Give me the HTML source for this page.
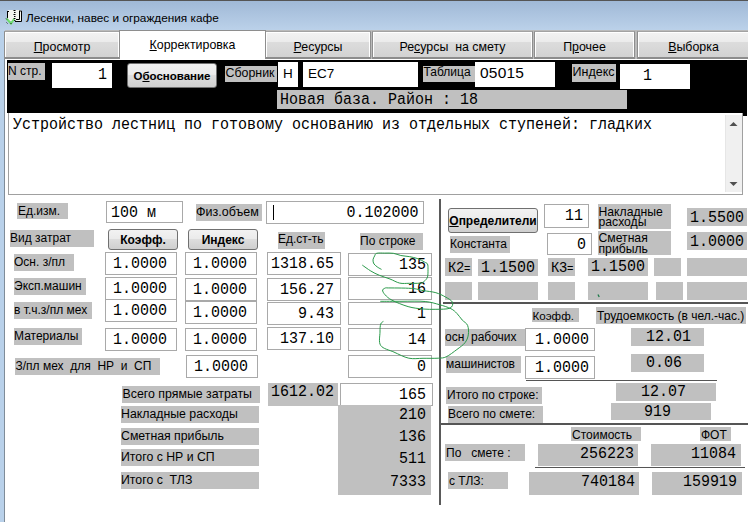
<!DOCTYPE html><html><head><meta charset="utf-8"><style>
*{margin:0;padding:0;box-sizing:border-box}
html,body{width:748px;height:522px;overflow:hidden;background:#fff;position:relative;font-family:"Liberation Sans",sans-serif;color:#000}
div{position:absolute}
span{position:absolute;white-space:pre;line-height:0}
.m{font-family:"Liberation Mono",monospace;transform:scaleY(1.1);transform-origin:0 0.2665em}
.g{background:#c0c0c0}
.g span{font-size:12px}
.bx{background:#fff;border:1px solid #a9a9a9}
.wb{background:#fff}
.gb{background:#c0c0c0}
.btn{border:1px solid #707070;border-radius:3px;background:linear-gradient(#f2f2f2 0%,#ebebeb 45%,#dddddd 50%,#cfcfcf 100%);font-weight:bold}
.btn span{left:0;right:0;text-align:center}
.tab{background:linear-gradient(#f2f2f2 0%,#ebebeb 40%,#dcdcdc 42%,#d2d2d2 100%);border:1px solid #8e8e8e;border-top-color:#a2a2a2;border-bottom:2px solid #8c8c8c;box-shadow:inset 1px 1px 0 #fff,inset -1px 0 0 #fff}
.tab span{left:0;right:0;text-align:center;font-size:12.4px}
small{font-size:11px}
u{text-decoration:underline;text-underline-offset:1px}
</style></head><body>
<div style="left:0;top:0;width:748px;height:31px;background:linear-gradient(#9fb8d6,#bcd2ea)"></div>
<div style="left:0;top:0;width:748px;height:1px;background:#555"></div>
<div style="left:0;top:31px;width:4px;height:491px;background:#b9d1ea"></div>
<div style="left:4px;top:31px;width:1px;height:491px;background:#7f8c99"></div>
<svg style="position:absolute;left:0;top:0" width="30" height="30"><rect x="8" y="10" width="13" height="11" fill="#f4f4f0"/><path d="M7.5 11v7M7.5 11.5h1.5" stroke="#000" stroke-width="1" fill="none"/><path d="M13.5 10.5h2M14 12.5h1.5M13.5 14.5h2M14 16.5h1.5M13.5 18.5h2M14 20.5h1.5" stroke="#000" stroke-width="1"/><path d="M15 21.5h6.5v-10.5h-1.5" stroke="#000" stroke-width="1" fill="none"/><path d="M16 19.5h3.5v-9" stroke="#000" stroke-width="1" fill="none"/><path d="M6.5 18.5l4.5 5l3-4.5" stroke="#6fdc6f" stroke-width="2" fill="none"/><path d="M6 18.5l1 1M6.5 22.5l1 1M10.5 23.5l1 0" stroke="#222" stroke-width="1"/></svg>
<div style="left:26px;top:0;height:31px;width:400px"><span style="left:0;top:17.9px;font-size:11.8px;color:#000">Лесенки, навес и ограждения кафе</span></div>
<div style="left:5px;top:30px;width:743px;height:29px;background:#bababa"></div>
<div class="tab" style="left:4px;top:31px;width:116px;height:28px"><span style="top:15.20px"><u>П</u>росмотр</span></div>
<div class="tab" style="left:265px;top:31px;width:106px;height:28px"><span style="top:15.20px"><u>Р</u>есурсы</span></div>
<div class="tab" style="left:372px;top:31px;width:161px;height:28px"><span style="top:15.20px">Ре<u>с</u>урсы  на смету</span></div>
<div class="tab" style="left:534px;top:31px;width:101px;height:28px"><span style="top:15.20px">П<u>р</u>очее</span></div>
<div class="tab" style="left:637px;top:31px;width:113px;height:28px"><span style="top:15.20px"><u>В</u>ыборка</span></div>
<div style="left:119px;top:30px;width:147px;height:30px;background:#fff;border:1px solid #8e8e8e;border-bottom:0"><span style="left:0;right:0;text-align:center;top:13.70px;font-size:12.4px"><u>К</u>орректировка</span></div>
<div style="left:5px;top:59px;width:743px;height:1px;background:#fff"></div>
<div style="left:7px;top:60px;width:740px;height:53px;background:#000"></div>
<div style="left:742px;top:112px;width:5px;height:3.5px;background:#000"></div>
<div class="g" style="left:8px;top:63px;width:37px;height:17px;"><span style="left:0px;top:7.54px;font-size:12px">N стр.</span></div>
<div class="wb" style="left:52px;top:63px;width:60px;height:25px;"><span class="m" style="right:5px;top:13.00px;font-size:15px">1</span></div>
<div class="btn" style="left:127px;top:63px;width:90px;height:25px"><span style="top:12.02px;font-size:11.5px">О<u>б</u>основание</span></div>
<div class="g" style="left:225px;top:66px;width:52px;height:16px;"><span style="left:0.5px;top:7.40px;font-size:12.4px">Сборник</span></div>
<div class="wb" style="left:278px;top:62px;width:20px;height:25px;"><span style="left:5px;top:11.82px;font-size:13.5px">Н</span></div>
<div class="wb" style="left:303px;top:62px;width:115px;height:25px;"><span style="left:5px;top:12.32px;font-size:13.5px">ЕС7</span></div>
<div class="g" style="left:423px;top:65.5px;width:52px;height:16px;"><span style="left:0.5px;top:6.84px;font-size:12px">Таблица</span></div>
<div class="wb" style="left:475px;top:62px;width:80px;height:25px;letter-spacing:0.2px"><span style="left:5px;top:11.13px;font-size:15.5px">05015</span></div>
<div class="g" style="left:572px;top:64px;width:44px;height:18px;"><span style="left:0.5px;top:8.37px;font-size:12.5px">Индекс</span></div>
<div class="wb" style="left:620px;top:64px;width:70px;height:25px;"><span class="m" style="left:23px;top:13.00px;font-size:15px">1</span></div>
<div class="gb" style="left:277px;top:90px;width:350px;height:19px;"><span class="m" style="left:3px;top:11.00px;font-size:15px">Новая база. Район : 18</span></div>
<div style="left:277px;top:90px;width:350px;height:19px"></div>
<div style="left:8px;top:113px;width:735px;height:82px;border:1px solid #a0a0a0;border-top:0;background:#fff"><span class="m" style="left:4px;top:13.00px;font-size:15px">Устройство лестниц по готовому основанию из отдельных ступеней: гладких</span></div>
<div style="left:725px;top:115px;width:17px;height:77px;background:#f0f0f0;border-left:1px solid #e6e6e6"></div>
<svg style="position:absolute;left:729px;top:121px" width="9" height="6"><path d="M0.5 5L4.5 1L8.5 5z" fill="#505050"/></svg>
<svg style="position:absolute;left:729px;top:181px" width="9" height="6"><path d="M0.5 1L4.5 5L8.5 1z" fill="#505050"/></svg>
<div class="g" style="left:17px;top:203px;width:51px;height:16px;"><span style="left:1px;top:7.84px;font-size:12px">Ед.изм.</span></div>
<div class="bx" style="left:106px;top:201px;width:77px;height:22px;"><span class="m" style="left:4px;top:12.00px;font-size:15px">100 м</span></div>
<div class="g" style="left:196px;top:204px;width:66px;height:17px;"><span style="left:0px;top:7.97px;font-size:12.5px">Физ.объем</span></div>
<div class="bx" style="left:266px;top:201px;width:158px;height:23px;"><span class="m" style="right:4.5px;top:12.00px;font-size:15px">0.102000</span></div>
<div style="left:272.5px;top:205px;width:1.5px;height:15px;background:#000"></div>
<div class="g" style="left:10px;top:230px;width:84px;height:17px;"><span style="left:0px;top:7.84px;font-size:12px">Вид затрат</span></div>
<div class="btn" style="left:108px;top:229px;width:70px;height:21px"><span style="top:10.34px;font-size:12px">Коэфф.</span></div>
<div class="btn" style="left:188px;top:229px;width:70px;height:21px"><span style="top:10.34px;font-size:12px">Индекс</span></div>
<div class="g" style="left:278px;top:232px;width:47px;height:17px;"><span style="left:0px;top:7.34px;font-size:12px">Ед.ст-ть</span></div>
<div class="g" style="left:360px;top:233px;width:63px;height:17px;"><span style="left:0px;top:7.84px;font-size:12px">По строке</span></div>
<div class="g" style="left:14px;top:254px;width:60px;height:17px;"><span style="left:0px;top:7.84px;font-size:12px">Осн. з/пл</span></div>
<div class="g" style="left:14px;top:278px;width:72px;height:17px;"><span style="left:0px;top:7.84px;font-size:12px">Эксп.машин</span></div>
<div class="g" style="left:14px;top:302px;width:78px;height:17px;"><span style="left:0px;top:7.84px;font-size:12px">в т.ч.з/пл мех</span></div>
<div class="g" style="left:14px;top:328px;width:68px;height:17px;"><span style="left:0px;top:7.84px;font-size:12px">Материалы</span></div>
<div class="g" style="left:15px;top:358px;width:145px;height:17px;"><span style="left:0.5px;top:8.34px;font-size:12px">З/пл мех  для  НР  и  СП</span></div>
<div class="bx" style="left:105px;top:252px;width:72px;height:23px;"><span class="m" style="left:7px;top:12.00px;font-size:15px">1.0000</span></div>
<div class="bx" style="left:105px;top:277px;width:72px;height:23px;"><span class="m" style="left:7px;top:12.00px;font-size:15px">1.0000</span></div>
<div class="bx" style="left:105px;top:299px;width:72px;height:23px;"><span class="m" style="left:7px;top:12.00px;font-size:15px">1.0000</span></div>
<div class="bx" style="left:105px;top:328px;width:72px;height:23px;"><span class="m" style="left:7px;top:12.00px;font-size:15px">1.0000</span></div>
<div class="bx" style="left:185px;top:252px;width:72px;height:23px;"><span class="m" style="left:7px;top:12.00px;font-size:15px">1.0000</span></div>
<div class="bx" style="left:185px;top:278px;width:72px;height:23px;"><span class="m" style="left:7px;top:12.00px;font-size:15px">1.0000</span></div>
<div class="bx" style="left:185px;top:301px;width:72px;height:23px;"><span class="m" style="left:7px;top:12.00px;font-size:15px">1.0000</span></div>
<div class="bx" style="left:185px;top:328px;width:72px;height:23px;"><span class="m" style="left:7px;top:12.00px;font-size:15px">1.0000</span></div>
<div class="bx" style="left:186px;top:355px;width:72px;height:23px;"><span class="m" style="left:7px;top:12.00px;font-size:15px">1.0000</span></div>
<div class="bx" style="left:267px;top:252px;width:74px;height:23px;"><span class="m" style="right:6px;top:12.00px;font-size:15px">1318.65</span></div>
<div class="bx" style="left:267px;top:278px;width:74px;height:23px;"><span class="m" style="right:6px;top:12.00px;font-size:15px">156.27</span></div>
<div class="bx" style="left:267px;top:302px;width:74px;height:23px;"><span class="m" style="right:6px;top:12.00px;font-size:15px">9.43</span></div>
<div class="bx" style="left:267px;top:327px;width:74px;height:23px;"><span class="m" style="right:6px;top:12.00px;font-size:15px">137.10</span></div>
<div class="bx" style="left:348px;top:253px;width:84px;height:23px;"><span class="m" style="right:5px;top:12.00px;font-size:15px">135</span></div>
<div class="bx" style="left:348px;top:277px;width:84px;height:23px;"><span class="m" style="right:5px;top:12.00px;font-size:15px">16</span></div>
<div class="bx" style="left:348px;top:302px;width:84px;height:23px;"><span class="m" style="right:5px;top:12.00px;font-size:15px">1</span></div>
<div class="bx" style="left:348px;top:328px;width:84px;height:23px;"><span class="m" style="right:5px;top:12.00px;font-size:15px">14</span></div>
<div class="bx" style="left:348px;top:355px;width:84px;height:23px;"><span class="m" style="right:5px;top:12.00px;font-size:15px">0</span></div>
<div class="g" style="left:122px;top:386px;width:138px;height:17px;"><span style="left:0.5px;top:7.72px;font-size:12.35px">Всего прямые затраты</span></div>
<div class="g" style="left:121px;top:406px;width:138px;height:17px;"><span style="left:0px;top:7.74px;font-size:12.3px">Накладные расходы</span></div>
<div class="g" style="left:121px;top:428px;width:138px;height:17px;"><span style="left:0px;top:7.74px;font-size:12.3px">Сметная прибыль</span></div>
<div class="g" style="left:121px;top:449px;width:138px;height:17px;"><span style="left:0px;top:7.74px;font-size:12.3px">Итого с НР и СП</span></div>
<div class="g" style="left:121px;top:472px;width:138px;height:17px;"><span style="left:0px;top:7.74px;font-size:12.3px">Итого с  ТЛЗ</span></div>
<div class="gb" style="left:268px;top:383px;width:70px;height:23px;"><span class="m" style="left:3px;top:10.00px;font-size:15px">1612.02</span></div>
<div class="gb" style="left:338px;top:405px;width:93px;height:90px"></div>
<div class="bx" style="left:340px;top:383px;width:93px;height:23px;"><span class="m" style="right:6px;top:12.00px;font-size:15px">165</span></div>
<div class="gb" style="left:338px;top:405px;width:93px;height:22px;"><span class="m" style="right:5px;top:11.00px;font-size:15px">210</span></div>
<div class="gb" style="left:338px;top:427px;width:93px;height:22px;"><span class="m" style="right:5px;top:11.00px;font-size:15px">136</span></div>
<div class="gb" style="left:338px;top:449px;width:93px;height:22px;"><span class="m" style="right:5px;top:11.00px;font-size:15px">511</span></div>
<div class="gb" style="left:338px;top:472px;width:93px;height:22px;"><span class="m" style="right:5px;top:11.00px;font-size:15px">7333</span></div>
<div style="left:439px;top:199px;width:2px;height:306px;background:#5a5a5a"></div>
<div style="left:443px;top:302px;width:305px;height:2px;background:#555"></div>
<div style="left:441px;top:423px;width:307px;height:2px;background:#555"></div>
<div class="btn" style="left:448px;top:208px;width:90px;height:25px"><span style="top:11.84px;font-size:12px"><u>О</u>пределители</span></div>
<div class="bx" style="left:544px;top:204px;width:45px;height:24px;"><span class="m" style="right:5px;top:11.50px;font-size:15px">11</span></div>
<div class="g" style="left:450px;top:236px;width:60px;height:17px;"><span style="left:0px;top:7.84px;font-size:12px">Константа</span></div>
<div class="bx" style="left:547px;top:233px;width:45px;height:22px;"><span class="m" style="right:5px;top:11.50px;font-size:15px">0</span></div>
<div class="g" style="left:598px;top:204px;width:73px;height:25px"><span style="left:0.5px;top:7.80px;font-size:12.2px">Накладные</span><span style="left:0.5px;top:18.30px;font-size:12.2px">расходы</span></div>
<div class="g" style="left:598px;top:231px;width:73px;height:24px"><span style="left:0.5px;top:7.30px;font-size:12.2px">Сметная</span><span style="left:0.5px;top:17.80px;font-size:12.2px">прибыль</span></div>
<div class="gb" style="left:687px;top:208px;width:60px;height:18px;"><span class="m" style="left:3px;top:10.50px;font-size:15px">1.5500</span></div>
<div class="gb" style="left:687px;top:232px;width:60px;height:18px;"><span class="m" style="left:3px;top:10.50px;font-size:15px">1.0000</span></div>
<div class="g" style="left:445px;top:258px;width:27px;height:18px;"><span style="left:3px;top:9.15px;font-size:14px">К2<small>=</small></span></div>
<div class="gb" style="left:478px;top:259px;width:60px;height:17px;"><span class="m" style="left:3px;top:10.00px;font-size:15px">1.1500</span></div>
<div class="g" style="left:548px;top:258px;width:27px;height:18px;"><span style="left:3px;top:9.15px;font-size:14px">К3<small>=</small></span></div>
<div class="gb" style="left:588px;top:258px;width:60px;height:18px;"><span class="m" style="left:3px;top:10.00px;font-size:15px">1.1500</span></div>
<div class="gb" style="left:654px;top:258px;width:27px;height:18px"></div>
<div class="gb" style="left:687px;top:258px;width:60px;height:18px"></div>
<div class="gb" style="left:445px;top:282px;width:27px;height:17.5px"></div>
<div class="gb" style="left:478px;top:282px;width:60px;height:17.5px"></div>
<div class="gb" style="left:548px;top:282px;width:27px;height:17.5px"></div>
<div class="gb" style="left:588px;top:282px;width:60px;height:17.5px"></div>
<div class="gb" style="left:656px;top:282px;width:27px;height:17.5px"></div>
<div class="gb" style="left:687px;top:282px;width:60px;height:17.5px"></div>
<div class="g" style="left:532px;top:308px;width:47px;height:14px;"><span style="left:0.5px;top:8.48px;font-size:11.6px">Коэфф.</span></div>
<div class="g" style="left:596px;top:307px;width:150px;height:17px;"><span style="left:1px;top:8.84px;font-size:12px">Трудоемкость (в чел.-час.)</span></div>
<div class="g" style="left:445px;top:329px;width:80px;height:17px;"><span style="left:0px;top:7.84px;font-size:12px">осн  рабочих</span></div>
<div class="bx" style="left:525px;top:328px;width:70px;height:23px;"><span class="m" style="left:9px;top:12.00px;font-size:15px">1.0000</span></div>
<div class="g" style="left:446px;top:356px;width:75px;height:17px;"><span style="left:0px;top:7.84px;font-size:12px">машинистов</span></div>
<div class="bx" style="left:525px;top:356px;width:70px;height:23px;"><span class="m" style="left:9px;top:12.00px;font-size:15px">1.0000</span></div>
<div class="gb" style="left:631px;top:328px;width:73px;height:18px;"><span class="m" style="left:15px;top:10.00px;font-size:15px">12.01</span></div>
<div class="gb" style="left:631px;top:354px;width:73px;height:18px;"><span class="m" style="left:15px;top:10.00px;font-size:15px">0.06</span></div>
<div style="left:526px;top:380px;width:191px;height:1px;background:#555"></div>
<div class="g" style="left:446px;top:387px;width:96px;height:17px;"><span style="left:1px;top:8.34px;font-size:12px">Итого по строке:</span></div>
<div class="gb" style="left:616px;top:383px;width:100px;height:18px;"><span class="m" style="left:25px;top:10.00px;font-size:15px">12.07</span></div>
<div class="g" style="left:448px;top:406px;width:95px;height:17px;"><span style="left:0px;top:8.34px;font-size:12px">Всего по смете:</span></div>
<div class="gb" style="left:611px;top:403px;width:100px;height:17px;"><span class="m" style="left:33px;top:10.00px;font-size:15px">919</span></div>
<div class="g" style="left:571px;top:427px;width:70px;height:14px;"><span style="left:1px;top:7.84px;font-size:12px">Стоимость</span></div>
<div class="g" style="left:700px;top:427px;width:31px;height:14px;"><span style="left:1px;top:7.84px;font-size:12px">ФОТ</span></div>
<div class="g" style="left:445px;top:444px;width:80px;height:17px;"><span style="left:1px;top:8.84px;font-size:12px">По   смете :</span></div>
<div class="gb" style="left:538px;top:444px;width:100px;height:22px;"><span class="m" style="right:4px;top:11.00px;font-size:15px">256223</span></div>
<div class="gb" style="left:651px;top:444px;width:90px;height:22px;"><span class="m" style="right:5px;top:11.00px;font-size:15px">11084</span></div>
<div style="left:535px;top:467px;width:210px;height:1px;background:#555"></div>
<div class="g" style="left:448px;top:472px;width:60px;height:17px;"><span style="left:1px;top:8.84px;font-size:12px">с ТЛЗ:</span></div>
<div class="gb" style="left:529px;top:472px;width:110px;height:23px;"><span class="m" style="right:4px;top:11.00px;font-size:15px">740184</span></div>
<div class="gb" style="left:652px;top:472px;width:90px;height:23px;"><span class="m" style="right:5px;top:11.00px;font-size:15px">159919</span></div>
<svg style="position:absolute;left:0;top:0" width="748" height="522"><path d="M381.5 269.4 C380.9 269.0 379.1 268.2 377.8 267.3 C376.6 266.4 374.8 265.2 374.0 264.0 C373.2 262.8 372.9 261.1 373.0 259.8 C373.1 258.5 374.0 257.1 374.6 256.0 C375.2 254.9 375.0 253.8 376.7 253.3 C378.4 252.8 381.9 253.1 384.7 253.1 C387.5 253.1 390.6 252.9 393.3 253.3 C396.0 253.7 398.1 254.9 400.8 255.5 C403.5 256.1 406.5 256.1 409.3 256.6 C412.1 257.1 415.4 257.8 417.9 258.7 C420.4 259.6 422.7 261.0 424.3 261.9 C425.9 262.8 426.9 262.8 427.5 264.0 C428.1 265.2 428.0 267.2 428.0 269.4 C428.0 271.5 428.1 274.9 427.5 276.9 C426.9 278.9 425.6 280.2 424.3 281.2 C423.1 282.2 422.5 282.8 420.0 283.1 C417.5 283.5 412.7 283.3 409.3 283.3 C405.9 283.3 402.9 283.8 399.7 283.1 C396.5 282.4 393.4 280.3 390.0 279.0 C386.6 277.7 382.6 276.6 379.4 275.3 C376.2 274.0 373.6 272.7 370.8 271.0 C368.0 269.3 363.7 266.1 362.3 265.1" fill="none" stroke="#2a9a4a" stroke-width="1"/><path d="M386.2 287.6 C385.6 288.0 382.8 288.8 382.6 290.0 C382.4 291.2 383.5 293.1 385.1 294.8 C386.7 296.5 388.2 298.2 392.0 300.2 C395.8 302.2 402.9 305.1 408.1 306.6 C413.3 308.1 418.5 308.6 423.1 309.0 C427.7 309.4 431.4 309.4 435.9 309.3 C440.3 309.2 447.0 309.4 449.8 308.2 C452.6 307.0 453.2 304.2 452.5 302.3 C451.8 300.4 448.3 298.6 445.5 297.0 C442.7 295.4 439.6 293.8 435.9 292.7 C432.2 291.6 427.2 291.3 423.1 290.6 C419.0 289.9 417.5 288.8 411.3 288.4 C405.1 287.9 390.4 288.0 386.2 287.9" fill="none" stroke="#2a9a4a" stroke-width="1"/><path d="M380.3 301.3 C383.9 301.3 394.5 301.3 402.0 301.3 C409.5 301.3 418.9 300.9 425.2 301.5 C431.4 302.1 435.2 303.5 439.5 304.7 C443.8 305.9 448.0 307.2 450.9 308.7 C453.8 310.1 455.0 311.5 456.9 313.4 C458.8 315.3 460.4 318.0 462.2 320.0 C464.0 322.0 466.6 322.9 467.6 325.4 C468.6 327.9 468.8 331.9 468.3 334.8 C467.9 337.7 466.8 340.4 464.9 342.8 C463.0 345.2 460.0 347.2 456.9 349.5 C453.8 351.8 449.3 355.4 446.2 356.8 C443.1 358.2 442.1 357.9 438.2 358.2 C434.3 358.4 427.9 358.3 423.0 358.3 C418.1 358.3 413.6 359.2 408.8 358.2 C404.0 357.2 398.7 354.2 394.0 352.1 C389.3 350.0 383.0 348.8 380.7 345.5 C378.4 342.2 380.0 335.7 380.0 332.1 C380.0 328.5 380.1 325.9 380.7 324.1 C381.3 322.3 382.9 321.8 383.4 321.4" fill="none" stroke="#2a9a4a" stroke-width="1"/><path d="M598 294.5l1.2 2.5" stroke="#1f7a4a" stroke-width="1.3"/></svg>
</body></html>
